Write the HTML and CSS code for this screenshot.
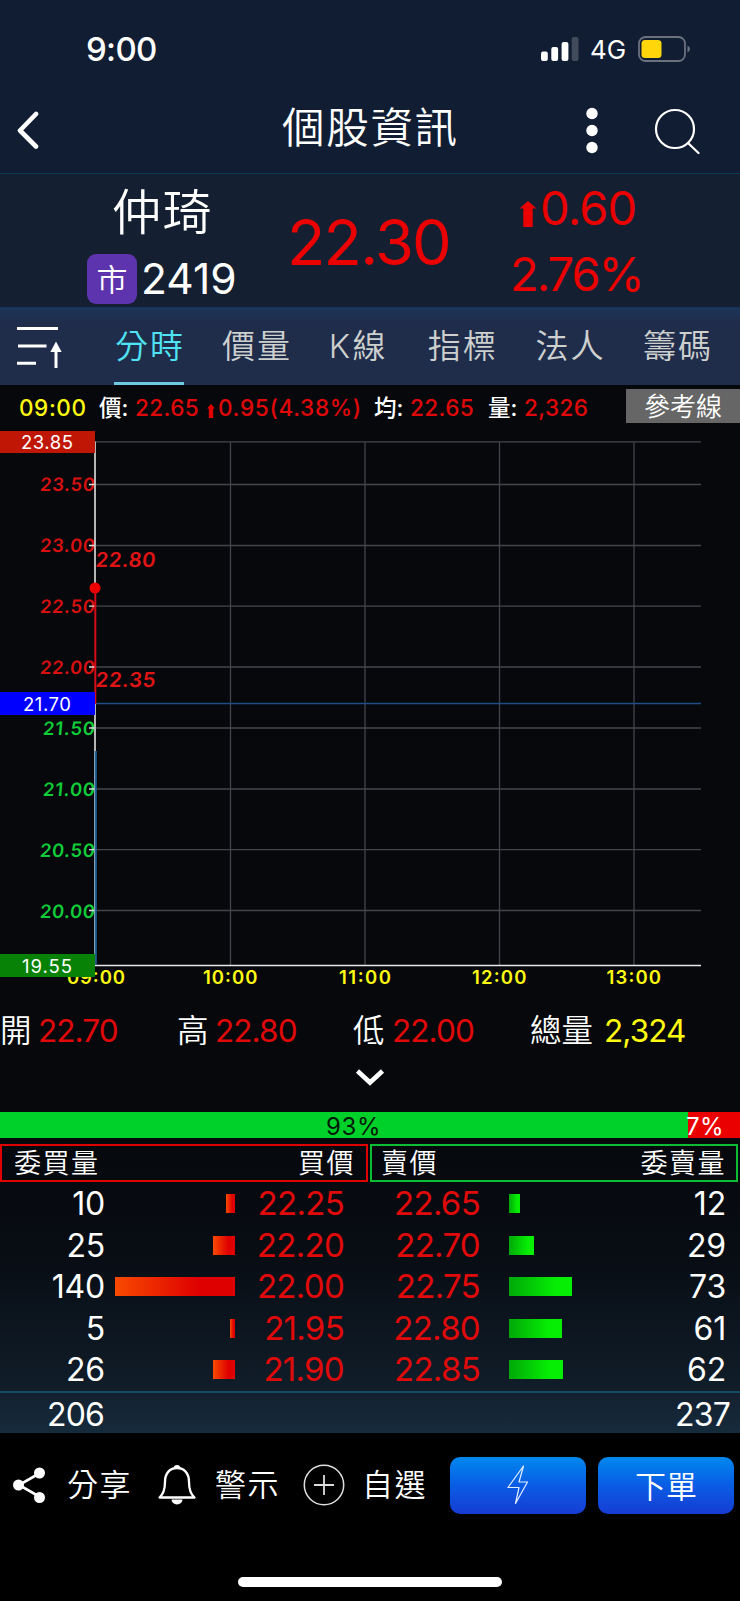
FILE: index.html
```html
<!DOCTYPE html>
<html lang="zh-Hant">
<head>
<meta charset="utf-8">
<title>個股資訊</title>
<link rel="stylesheet" href="styles.css">
</head>
<body>
<div class="app">
  <header class="top">
    <div class="status">
      <span class="clock">9:00</span>
      <svg class="signal" width="38" height="24" viewBox="0 0 38 24"><rect x="0" y="14.5" width="6.8" height="9.5" rx="2" fill="#fff"/><rect x="10.3" y="10" width="6.8" height="14" rx="2" fill="#fff"/><rect x="20.6" y="5" width="6.8" height="19" rx="2" fill="#fff"/><rect x="30.7" y="0" width="6.8" height="24" rx="2" fill="#414b5c"/></svg>
      <span class="net">4G</span>
      <svg class="battery" width="53" height="26" viewBox="0 0 53 26"><rect x="1" y="1" width="46" height="24" rx="6.5" fill="none" stroke="#6a7280" stroke-width="1.8"/><rect x="3.5" y="4" width="20" height="18" rx="3.5" fill="#ffd60a"/><path d="M49.500 9.500q2.500 1 2.500 3.500t-2.500 3.500z" fill="#6a7280"/></svg>
    </div>
    <div class="nav">
      <svg class="back" width="24" height="38" viewBox="0 0 24 38"><path d="M20 3L4 19.500l16 16" fill="none" stroke="#fff" stroke-width="4.600" stroke-linecap="round" stroke-linejoin="round"/></svg>
      <h1 class="title">個股資訊</h1>
      <svg class="more" width="12" height="48" viewBox="0 0 12 48"><g fill="#fff"><circle cx="6" cy="7.500" r="5.700"/><circle cx="6" cy="24.500" r="5.700"/><circle cx="6" cy="41.500" r="5.700"/></g></svg>
      <svg class="search" width="48" height="48" viewBox="0 0 48 48"><g fill="none" stroke="#fff" stroke-width="2.200" stroke-linecap="round"><circle cx="21" cy="23" r="19"/><path d="M34 37L44.500 47"/></g></svg>
    </div>
  </header>

  <section class="quote">
    <div class="ident">
      <div class="name">仲琦</div>
      <div class="code"><span class="badge">市</span><span class="num">2419</span></div>
    </div>
    <div class="last">22.30</div>
    <div class="change">
      <div class="diff"><svg width="18" height="26" viewBox="0 0 18 26"><path d="M9 0L17.500 7.500H13.700V26H4.300V7.500H.500z" fill="#ea0000"/></svg><span>0.60</span></div>
      <div class="pct">2.76%</div>
    </div>
  </section>

  <nav class="tabs">
    <svg class="sort" width="46" height="44" viewBox="0 0 46 44"><path d="M0 3.500H41M1 21H29.500M0 38.200H19" stroke="#fff" stroke-width="3"/><path d="M39 43V24" stroke="#fff" stroke-width="3"/><path d="M39 16.500l5.700 10.500H33.300z" fill="#fff"/></svg>
    <span class="tab on">分時</span><span class="tab">價量</span><span class="tab k">K線</span><span class="tab">指標</span><span class="tab">法人</span><span class="tab">籌碼</span>
  </nav>

  <div class="info">
    <span class="y">09:00</span><span>價:</span><span class="r">22.65</span>
    <span class="r delta"><svg width="8" height="14" viewBox="0 0 8 14"><path d="M4 0L8 4.500H6.200V14H1.800V4.500H0z" fill="#e00000"/></svg>0.95(4.38%)</span>
    <span>均:</span><span class="r">22.65</span><span>量:</span><span class="r">2,326</span>
    <button class="ref">參考線</button>
  </div>

  <svg class="chart" width="740" height="565" viewBox="0 430 740 565">
    <g class="grid">
      <path d="M95 441.800H701M95 484.500H701M95 545.500H701M95 606.200H701M95 667H701M95 728H701M95 789H701M95 849.700H701M95 910.500H701"/>
      <path d="M230.500 442V965M365 442V965M499.500 442V965M634 442V965"/>
    </g>
    <path d="M95 703.500H701" stroke="#1f4e86" stroke-width="1.500"/>
    <path d="M95 965.500H701" stroke="#e8e8e8" stroke-width="1.300"/>
    <g class="up">
      <text transform="translate(39.500 491.300) skewX(-5)" textLength="55">23.50</text>
      <text transform="translate(39.500 552.300) skewX(-5)" textLength="55">23.00</text>
      <text transform="translate(39.500 613) skewX(-5)" textLength="55">22.50</text>
      <text transform="translate(39.500 674) skewX(-5)" textLength="55">22.00</text>
    </g>
    <g class="down">
      <text transform="translate(42.500 735) skewX(-5)" textLength="52">21.50</text>
      <text transform="translate(42.500 796) skewX(-5)" textLength="52">21.00</text>
      <text transform="translate(39.500 856.700) skewX(-5)" textLength="55">20.50</text>
      <text transform="translate(39.500 917.500) skewX(-5)" textLength="55">20.00</text>
    </g>
    <path d="M89 484.500h6M89 545.500h6M89 606.200h6M89 667h6M89 728h6M89 789h6M89 849.700h6M89 910.500h6" stroke="#ddd" stroke-width="1.300"/>
    <path d="M95 441.500V588M95 703V751" stroke="#c9c9c9" stroke-width="1.800"/>
    <path d="M95.300 588V704" stroke="#d60c18" stroke-width="2"/>
    <path d="M94.800 751V965" stroke="#8fb0c4" stroke-width="1.400"/>
    <path d="M96 751V965" stroke="#1d5f96" stroke-width="1.600"/>
    <circle cx="95" cy="588" r="5.500" fill="#ee0000"/>
    <g class="mark"><text transform="translate(95 567) skewX(-5)" textLength="60">22.80</text><text transform="translate(95 687) skewX(-5)" textLength="60">22.35</text></g>
    <g class="time">
      <text x="67" y="984" textLength="58">09:00</text>
      <text x="203" y="984" textLength="54.500">10:00</text>
      <text x="339" y="984" textLength="52">11:00</text>
      <text x="472" y="984" textLength="54.500">12:00</text>
      <text x="606.500" y="984" textLength="54.500">13:00</text>
    </g>
    <path d="M0 431H95V453H0z" fill="#c01606"/>
    <path d="M0 692H95V715H0z" fill="#0000ff"/>
    <path d="M0 954H95V977H0z" fill="#088206"/>
    <g class="tag"><text x="21" y="449" textLength="52">23.85</text><text x="23" y="710.700" textLength="48">21.70</text><text x="22" y="972.500" textLength="50">19.55</text></g>
  </svg>

  <div class="stats">
    <span>開</span><b class="r">22.70</b><span>高</span><b class="r">22.80</b><span>低</span><b class="r">22.00</b><span>總量</span><b class="y">2,324</b>
  </div>
  <svg class="expand" width="30" height="20" viewBox="0 0 30 20"><path d="M2.500 4L15 15.500L27.500 4" fill="none" stroke="#fff" stroke-width="4.600"/></svg>

  <div class="ratio"><span class="in">93%</span><span class="out"><span>7%</span></span></div>

  <section class="book">
    <div class="heads">
      <div class="head bid"><span>委買量</span><span>買價</span></div>
      <div class="head ask"><span>賣價</span><span>委賣量</span></div>
    </div>
    <div class="row"><span class="qty">10</span><i class="bar b" style="width:9px"></i><span class="price">22.25</span><span class="price">22.65</span><i class="bar a" style="width:10.500px"></i><span class="qty">12</span></div>
    <div class="row"><span class="qty">25</span><i class="bar b" style="width:22px"></i><span class="price">22.20</span><span class="price">22.70</span><i class="bar a" style="width:25px"></i><span class="qty">29</span></div>
    <div class="row"><span class="qty">140</span><i class="bar b" style="width:120.500px"></i><span class="price">22.00</span><span class="price">22.75</span><i class="bar a" style="width:63px"></i><span class="qty">73</span></div>
    <div class="row"><span class="qty">5</span><i class="bar b" style="width:5px"></i><span class="price">21.95</span><span class="price">22.80</span><i class="bar a" style="width:53px"></i><span class="qty">61</span></div>
    <div class="row"><span class="qty">26</span><i class="bar b" style="width:22.500px"></i><span class="price">21.90</span><span class="price">22.85</span><i class="bar a" style="width:53.500px"></i><span class="qty">62</span></div>
    <div class="total"><span>206</span><span>237</span></div>
  </section>

  <footer class="foot">
    <div class="actions">
      <svg width="34" height="38" viewBox="0 0 34 38"><path d="M27 7L6 19l21 12" fill="none" stroke="#fff" stroke-width="2.600"/><g fill="#fff"><circle cx="26.500" cy="7" r="5.500"/><circle cx="5.500" cy="19" r="5.500"/><circle cx="26.500" cy="31.500" r="5.500"/></g></svg>
      <span>分享</span>
      <svg width="38" height="42" viewBox="0 0 38 42"><path d="M1.500 33.500C5.500 30 7 25 7 18C7 9 12 4 19 4S31 9 31 18C31 25 32.500 30 36.500 33.500z" fill="none" stroke="#fff" stroke-width="2.300" stroke-linejoin="round"/><path d="M15.500 4.500a3.500 3.500 0 0 1 7 0zM13.500 35.500h11a5.500 5 0 0 1-11 0z" fill="#fff"/></svg>
      <span>警示</span>
      <svg width="42" height="42" viewBox="0 0 42 42"><g fill="none" stroke="#ddd" stroke-width="1.500"><circle cx="21" cy="21" r="19.700"/><path d="M11 21H31M21 11V31" stroke-width="1.800"/></g></svg>
      <span>自選</span>
    </div>
    <button class="btn"><svg width="22" height="40" viewBox="0 0 22 40"><path d="M16.500 1L1 22.500H12L8.500 38.500L20.500 17H12z" fill="none" stroke="#e4efff" stroke-width="1.200" stroke-linejoin="round"/></svg></button>
    <button class="btn"><span>下單</span></button>
  </footer>
  <div class="home"></div>
</div>
</body>
</html>
```
FILE: styles.css
```css
* { box-sizing: border-box; margin: 0; padding: 0; }
body { background: #000; }
.app {
  width: 740px; height: 1601px; overflow: hidden;
  display: flex; flex-direction: column;
  font-family: Inter, "Noto Sans CJK TC", sans-serif;
  color: #fff; background: #06080c;
}
svg { display: block; flex: none; }
span, b, div { white-space: nowrap; }
button { border: 0; font: inherit; color: inherit; }

.top { height: 174px; background: #111d32; border-bottom: 1px solid #0a3a4e; }
.status { display: flex; align-items: center; height: 98px; padding-left: 86px; }
.clock { width: 455px; font-size: 33px; font-weight: 500; letter-spacing: -0.700px; }
.net { width: 59px; padding-left: 11px; font-size: 26px; font-weight: 400; }
.nav { display: flex; align-items: center; height: 64px; padding-left: 16px; }
.title { width: 304px; margin: -5px 0 0 242px; font-size: 42.500px; font-weight: 350; line-height: 50px; letter-spacing: 1.700px; }
.search { margin-left: 56px; }

.quote { height: 133px; display: flex; background: #142031; }
.ident { width: 287px; padding-left: 87px; }
.name { padding-left: 25px; margin-top: 11px; font-size: 49px; font-weight: 350; line-height: 56px; letter-spacing: 1.500px; }
.code { display: flex; align-items: center; gap: 4px; margin-top: 12px; }
.badge { width: 50px; height: 50px; border-radius: 9px; background: #5d34ae; font-size: 31px; line-height: 52px; text-align: center; font-weight: 350; }
.num { font-size: 42.500px; line-height: 52px; font-weight: 400; }
.last { width: 226px; padding-top: 33px; font-size: 63px; line-height: 70px; letter-spacing: -1.800px; color: #ea0000; }
.change { color: #ea0000; font-size: 47px; line-height: 56px; padding-top: 6px; }
.diff { display: flex; padding-left: 6px; gap: 3px; letter-spacing: -0.800px; }
.diff svg { margin-top: 21px; }
.pct { margin: 10px 0 0 -3px; letter-spacing: -2px; }

.tabs { height: 78px; display: flex; align-items: flex-start; padding-left: 17px; background: linear-gradient(#1b3557, #1f2d4b 14px); border-top: 1px solid #14345a; }
.sort { margin: 17px 34px 0 0; }
.tab { width: 107.700px; height: 77px; padding-left: 19px; font-size: 33px; font-weight: 350; line-height: 77px; letter-spacing: 2px; color: #cdd0cf; }
.tab.on { width: 70px; margin: 0 19px 0 17px; padding-left: 1px; color: #4fe3f5; border-bottom: 3px solid #6cc9df; }
.tab.k { width: 98px; padding-left: 18px; letter-spacing: 2.500px; }

.info { height: 45px; display: grid; grid-template-columns: 79px 37px 72px 166px 37px 77px 37px 101px 114px; padding-left: 20px; align-items: start; font-size: 22.500px; line-height: 46px; font-weight: 500; }
.info .r { letter-spacing: 0.400px; margin-left: -1px; }
.info .y { letter-spacing: 0.600px; margin-left: -1px; }
.r { color: #e00808; }
.y { color: #fffb10; }
.info .delta { display: flex; gap: 3px; letter-spacing: 0.700px; margin-left: -1px; }
.delta svg { margin-top: 19px; }
.ref { margin-top: 4px; height: 34px; background: #666; font-size: 26px; line-height: 36px; font-weight: 350; }

.chart { font-family: Inter, sans-serif; }
.grid { stroke: #43454a; stroke-width: 1.300; fill: none; }
.up, .down { font-size: 18.500px; font-weight: 600; }
.mark { font-size: 20.500px; font-weight: 600; fill: #e01414; }
.up { fill: #d81010; }
.down { fill: #10cc38; }
.time { font-size: 18.500px; font-weight: 600; fill: #fffb10; }
.tag { font-size: 18.500px; fill: #fff; }

.stats { display: grid; grid-template-columns: 38px 139px 38px 138px 39px 138px 74px auto; height: 71px; font-size: 31.500px; line-height: 72px; font-weight: 350; }
.stats b { font-weight: 400; letter-spacing: -0.900px; }
.expand { margin: 1px 0 25px 355px; }

.ratio { display: flex; height: 26px; font-size: 24px; line-height: 29px; }
.in { width: 688px; padding-left: 326px; color: #031a06; background: #00d02a; letter-spacing: 0.700px; }
.out { width: 52px; background: #ea0000; }
.out span { margin-left: -2px; letter-spacing: 0.400px; }

.book { padding-top: 6px; background: linear-gradient(#06080c, #080d14 40%, #132230); }
.heads { display: flex; gap: 2px; }
.head { width: 368px; height: 38px; display: flex; justify-content: space-between; border: 2px solid #e00000; font-size: 27px; line-height: 36px; font-weight: 350; letter-spacing: 1.500px; padding: 0 11px 0 12px; }
.head.ask { border-color: #0cbc34; padding: 0 10px 0 9px; }
.row { height: 41.500px; display: grid; grid-template-columns: 105px 130px 109px 136px 245px; align-items: center; font-size: 32px; line-height: 42px; padding-top: 1px; }
.row .qty { grid-row: 1; text-align: right; letter-spacing: -0.200px; }
.row .qty:last-child { grid-column: 5; margin-right: -1px; }
.row .price { text-align: right; color: #e00a0a; font-size: 33px; letter-spacing: -0.700px; margin-top: -2px; }
.bar { height: 19px; margin-top: -1px; }
.bar.b { justify-self: end; background: linear-gradient(90deg, #f84a00, #de0000 70%); }
.bar.a { grid-row: 1; grid-column: 5; margin-left: 29px; background: linear-gradient(90deg, #00a808, #06ee04 75%); }
.total { height: 42px; margin-top: 1px; display: flex; justify-content: space-between; padding: 0 10px 0 47px; border-top: 2px solid #124c63; background: linear-gradient(#142030, #152b3c); font-size: 32px; line-height: 44px; letter-spacing: -0.800px; }

.foot { height: 106px; display: flex; align-items: center; gap: 12px; padding-bottom: 1px; background: #000; }
.actions { width: 438px; display: grid; grid-template-columns: 54px 91px 57px 88px 59px auto; padding-left: 13px; align-items: center; font-size: 31px; font-weight: 350; line-height: 40px; letter-spacing: 1.500px; }
.btn { width: 136px; height: 57px; border-radius: 10px; display: flex; align-items: center; justify-content: center; background: linear-gradient(#0088ee, #0a5ce4 50%, #163cd4); font-size: 31px; font-weight: 350; }
.btn span { padding-bottom: 2px; }
.home { flex: 1; background: #000; padding: 38px 0 0 238px; }
.home::before { content: ""; display: block; width: 264px; height: 10px; border-radius: 5px; background: #fff; }
```
